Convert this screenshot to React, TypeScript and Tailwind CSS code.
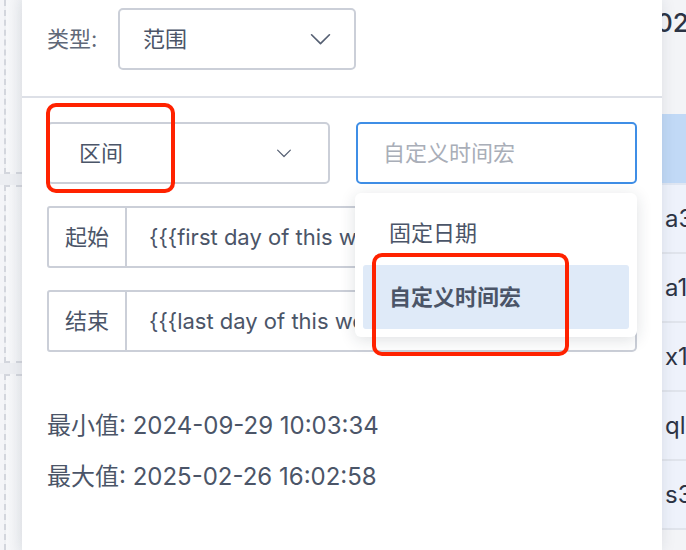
import React from 'react';

function Chevron({ className }: { className?: string }) {
  return (
    <svg className={className} viewBox="0 0 20 12" fill="none" stroke="currentColor" strokeWidth="1.6" strokeLinecap="round" strokeLinejoin="round">
      <polyline points="1.5,1.5 10,10 18.5,1.5" />
    </svg>
  );
}

function LeftStrip() {
  return (
    <div className="w-[22px] shrink-0 flex flex-col bg-[#f4f5f8]">
      <div className="h-[174px] border-l-2 border-b-2 border-dashed border-[#d3d6dd] ml-[4px] bg-gradient-to-r from-[#f7f8fa] to-[#eef0f3]" />
      <div className="h-[11px] bg-[#eceef2]" />
      <div className="h-[178px] border-l-2 border-t-2 border-b-2 border-dashed border-[#d3d6dd] ml-[4px] bg-gradient-to-r from-[#f7f8fa] to-[#eef0f3]" />
      <div className="h-[11px] bg-[#eceef2]" />
      <div className="flex-1 border-l-2 border-t-2 border-dashed border-[#d3d6dd] ml-[4px] bg-gradient-to-r from-[#f7f8fa] to-[#eef0f3]" />
    </div>
  );
}

function RightStrip() {
  const rows = ['a3', 'a1', 'x1', 'ql', 's3'];
  return (
    <div className="flex-1 overflow-hidden flex flex-col bg-[#f3f4f7]">
      <div className="h-[114px] pt-[4px] whitespace-nowrap">
        <span className="block -ml-[22px] text-[26px] leading-[38px] font-medium text-[#2c3445]">202</span>
      </div>
      <div className="h-[71px] bg-[#c1d9f6] border-b-2 border-[#dfe6f2]" />
      {rows.map((r) => (
        <div key={r} className="h-[69px] flex items-center pl-[3px] bg-[#eef2fb] border-b-2 border-[#e0e4ec] whitespace-nowrap text-[24px] text-[#2c3445]">
          {r}
        </div>
      ))}
    </div>
  );
}

export default function App() {
  return (
    <div className="relative w-[686px] h-[550px] overflow-hidden flex bg-white font-['Inter','Noto_Sans_CJK_SC',sans-serif]">
      <LeftStrip />

      <div className="relative z-10 w-[640px] shrink-0 bg-white shadow-[0_0_14px_rgba(30,40,60,0.10)] flex flex-col">
        <div className="h-[98px] shrink-0 flex items-start pt-[8px] pl-[25px] border-b-2 border-[#dde0e7]">
          <div className="w-[71px] h-[62px] flex items-center text-[22px] text-[#5f6878]">类型:</div>
          <div className="w-[238px] h-[62px] flex items-center justify-between pl-[23px] pr-[23px] border-2 border-[#cbcfd8] rounded-[5px] text-[22px] text-[#4b5568]">
            <span>范围</span>
            <Chevron className="w-[21px] h-[13px] text-[#566073]" />
          </div>
        </div>

        <div className="px-[25px] pt-[24px] flex flex-col">
          <div className="flex gap-[26px]">
            <div className="w-[283px] h-[62px] flex items-center justify-between pl-[30px] pr-[36px] border-2 border-[#cbcfd8] rounded-[5px] text-[22px] text-[#4b5568]">
              <span>区间</span>
              <Chevron className="w-[16px] h-[9px] text-[#566073]" />
            </div>
            <div className="flex-1 h-[62px] flex items-center pl-[25px] border-2 border-[#3f8ee6] rounded-[5px] text-[22px] text-[#a9aeb8]">
              自定义时间宏
            </div>
          </div>

          <div className="flex mt-[22px] h-[62px]">
            <div className="w-[80px] flex items-center justify-center border-2 border-[#cbcfd8] rounded-l-[3px] text-[22px] text-[#4b5568]">起始</div>
            <div className="flex-1 flex items-center pl-[22px] border-2 border-l-0 border-[#cbcfd8] rounded-r-[5px] text-[22px] text-[#4b5568] whitespace-nowrap overflow-hidden">
              {'{{{first day of this week}}}'}
            </div>
          </div>

          <div className="flex mt-[22px] h-[62px]">
            <div className="w-[80px] flex items-center justify-center border-2 border-[#cbcfd8] rounded-l-[3px] text-[22px] text-[#4b5568]">结束</div>
            <div className="flex-1 flex items-center pl-[22px] border-2 border-l-0 border-[#cbcfd8] rounded-r-[5px] text-[22px] text-[#4b5568] whitespace-nowrap overflow-hidden">
              {'{{{last day of this week}}}'}
            </div>
          </div>

          <div className="mt-[59px] text-[24px] leading-[30px] text-[#4b5568]">最小值: 2024-09-29 10:03:34</div>
          <div className="mt-[21px] text-[24px] leading-[30px] text-[#4b5568]">最大值: 2025-02-26 16:02:58</div>
        </div>

        <div className="absolute left-[333px] top-[193px] w-[282px] py-[8px] bg-white rounded-[6px] shadow-[0_3px_16px_rgba(30,40,60,0.14)] flex flex-col">
          <div className="h-[64px] flex items-center pl-[34px] text-[22px] text-[#4b5568]">固定日期</div>
          <div className="mx-[8px] h-[64px] flex items-center pl-[26px] rounded-[3px] bg-[#dfeaf8] text-[22px] font-bold text-[#4b5568]">自定义时间宏</div>
        </div>
      </div>

      <RightStrip />

      <div className="absolute z-20 left-[46px] top-[103px] w-[129px] h-[90px] border-[4px] border-[#ff2200] rounded-[10px]" />
      <div className="absolute z-20 left-[372px] top-[253px] w-[197px] h-[103px] border-[4px] border-[#ff2200] rounded-[10px]" />
    </div>
  );
}
